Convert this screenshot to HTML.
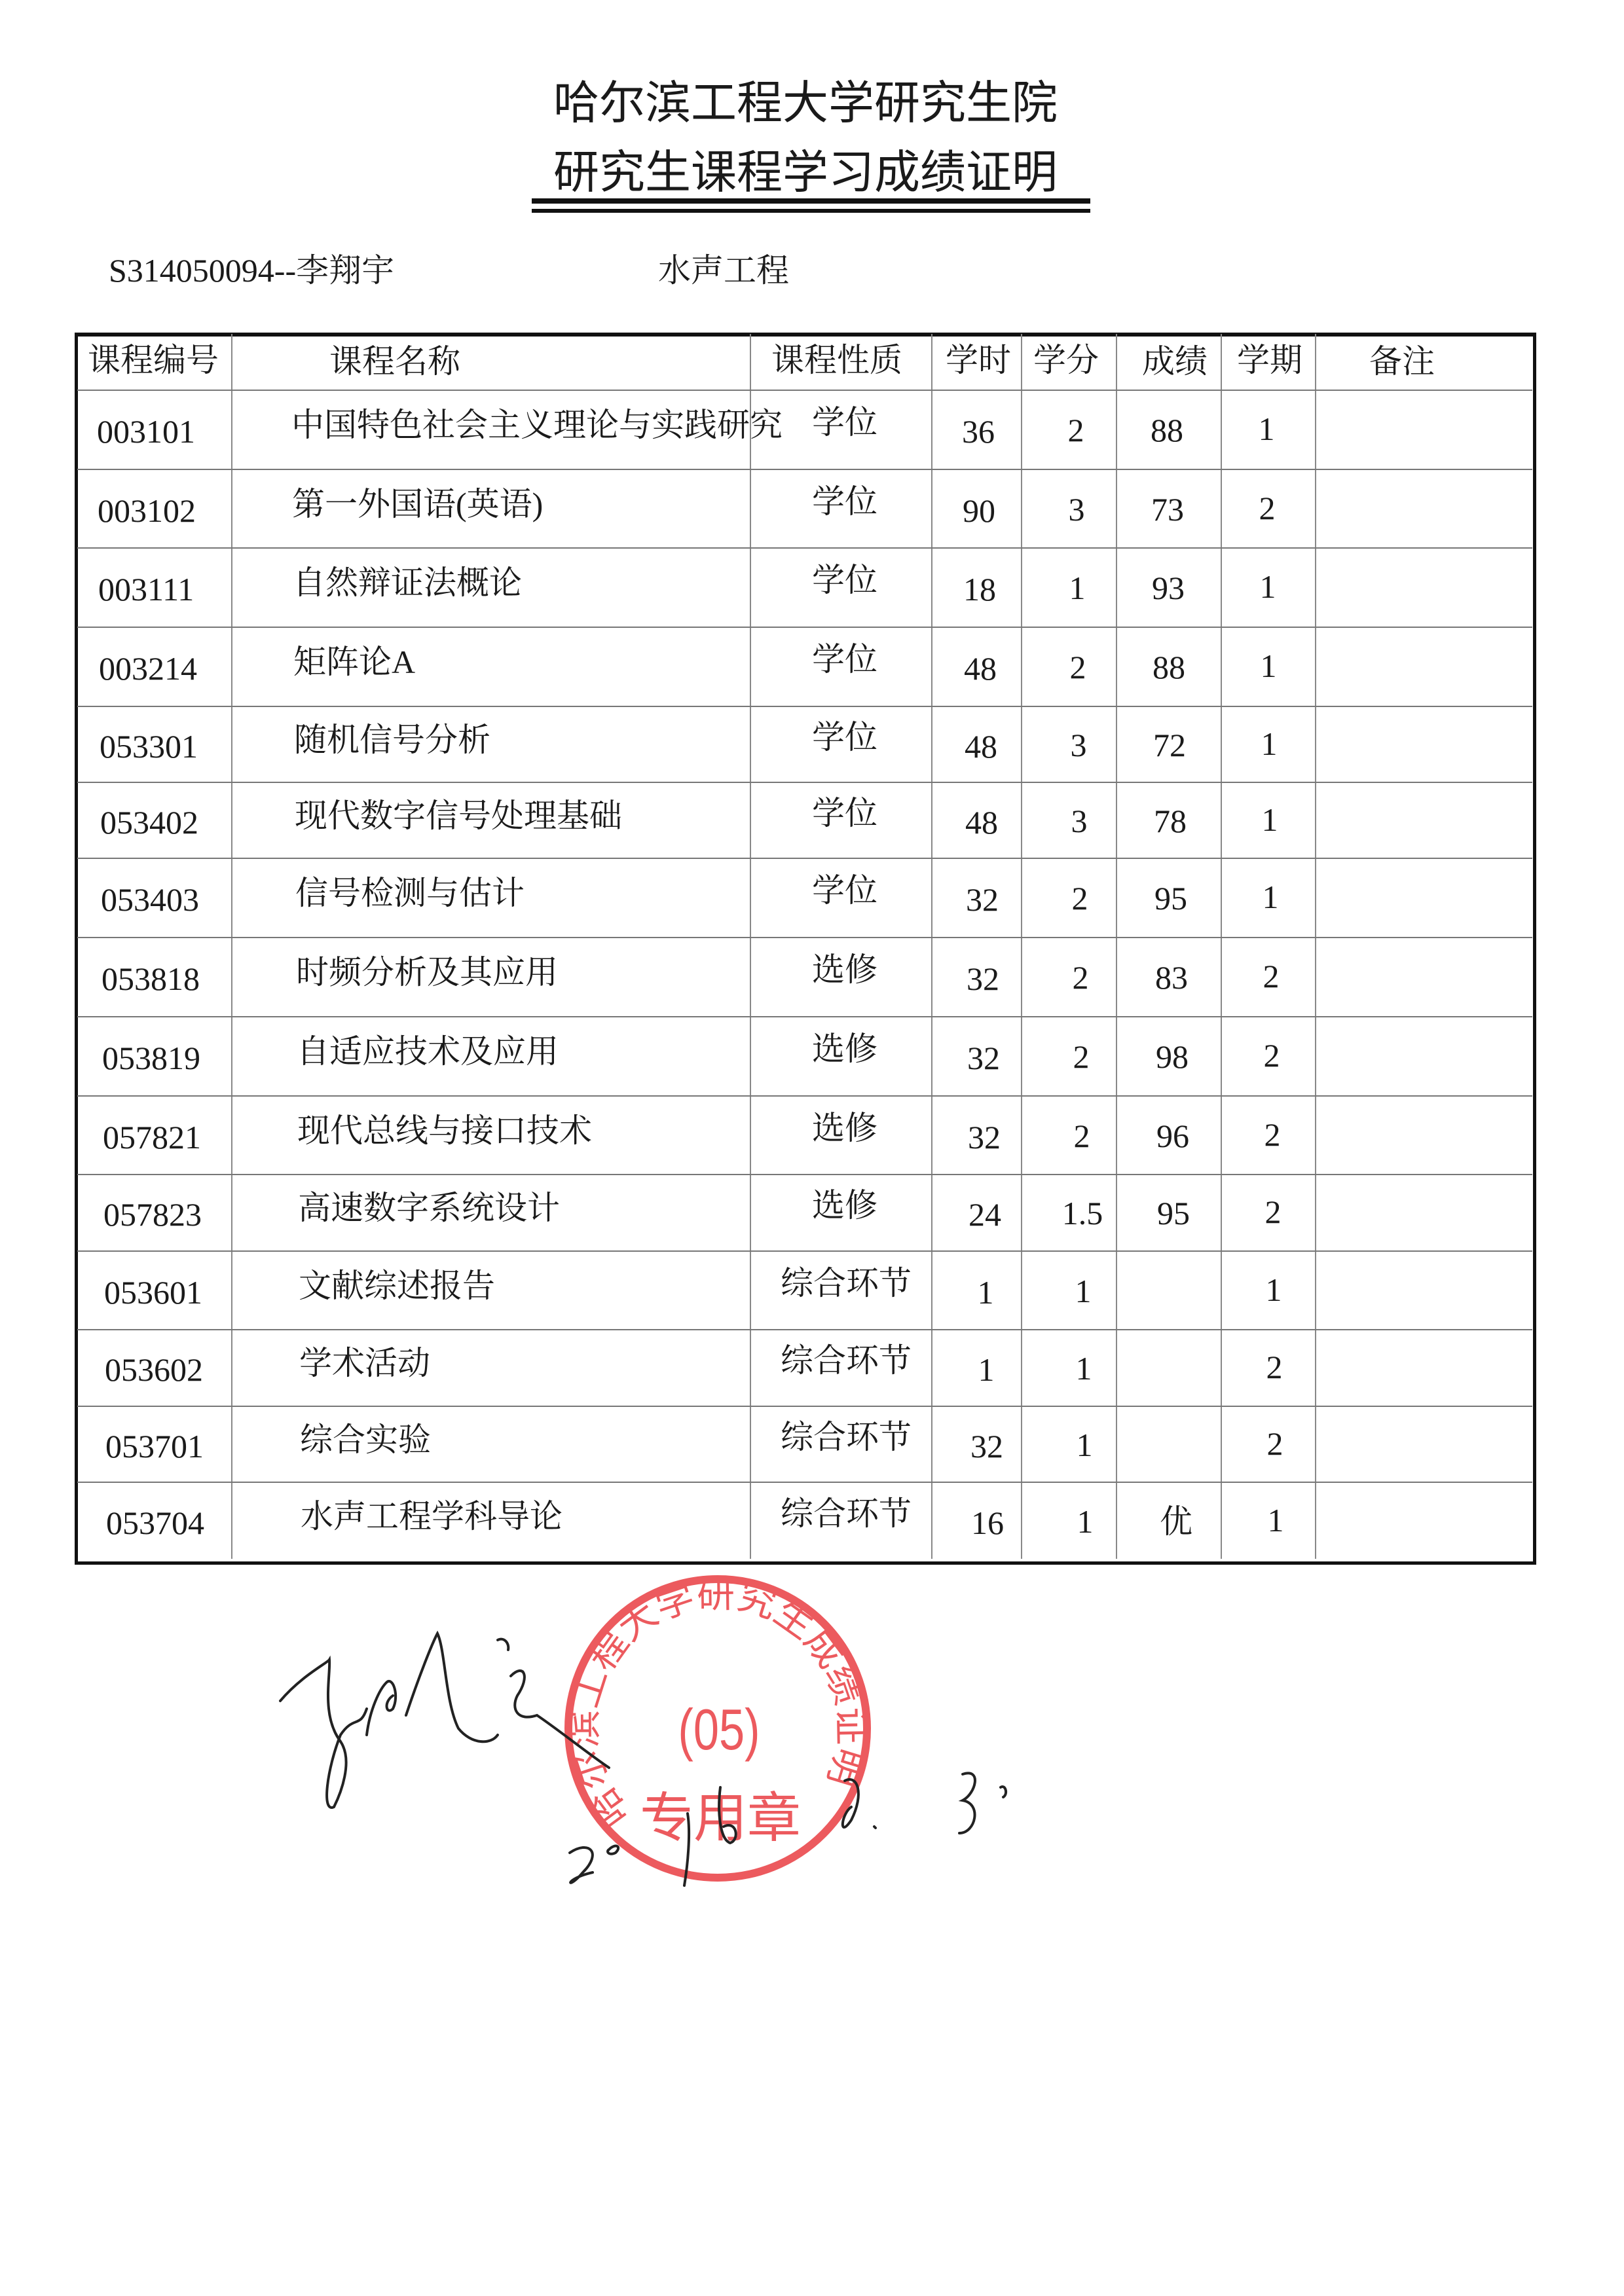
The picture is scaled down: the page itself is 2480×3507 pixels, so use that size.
<!DOCTYPE html>
<html><head><meta charset="utf-8"><style>
html,body{margin:0;padding:0;background:#fff}
body{width:2480px;height:3507px;position:relative;overflow:hidden;font-family:"Liberation Serif","Noto Serif CJK SC",serif;color:#1a1a1a}
.t{position:absolute;white-space:nowrap;line-height:1}
.h{font-size:70px;font-family:"Liberation Sans","Noto Sans CJK SC",sans-serif;left:0;width:2480px;text-align:center}
.c{font-size:50px;transform:translate(-50%,-50%)}
.l{font-size:50px;transform:translateY(-50%)}
.hl{position:absolute;left:118px;width:2222px;height:2px;background:#777}
.vl{position:absolute;top:510px;height:1871px;width:2px;background:#888}
</style></head><body>
<div class="t h" style="top:122px;left:-10px">哈尔滨工程大学研究生院</div>
<div class="t h" style="top:228px;left:-10px">研究生课程学习成绩证明</div>
<div style="position:absolute;left:812px;top:303px;width:853px;height:8px;background:#111"></div>
<div style="position:absolute;left:812px;top:319px;width:853px;height:6px;background:#111"></div>
<div class="t l" style="left:166px;top:413px;font-size:50px">S314050094--李翔宇</div>
<div class="t l" style="left:1005px;top:413px;font-size:50px">水声工程</div>

<div style="position:absolute;left:114px;top:508px;width:2222px;height:1871px;border:5px solid #111;border-top-width:6px"></div>
<div class="vl" style="left:353px"></div><div class="vl" style="left:1145px"></div><div class="vl" style="left:1422px"></div><div class="vl" style="left:1559px"></div><div class="vl" style="left:1704px"></div><div class="vl" style="left:1864px"></div><div class="vl" style="left:2008px"></div>
<div class="hl" style="top:595px"></div><div class="hl" style="top:716px"></div><div class="hl" style="top:836px"></div><div class="hl" style="top:957px"></div><div class="hl" style="top:1078px"></div><div class="hl" style="top:1194px"></div><div class="hl" style="top:1310px"></div><div class="hl" style="top:1431px"></div><div class="hl" style="top:1552px"></div><div class="hl" style="top:1673px"></div><div class="hl" style="top:1793px"></div><div class="hl" style="top:1910px"></div><div class="hl" style="top:2030px"></div><div class="hl" style="top:2147px"></div><div class="hl" style="top:2263px"></div>

<div class="t l" style="left:134px;top:550px">课程编号</div>
<div class="t l" style="left:503px;top:552px">课程名称</div>
<div class="t l" style="left:1178px;top:550px">课程性质</div>
<div class="t l" style="left:1444px;top:550px">学时</div>
<div class="t l" style="left:1578px;top:550px">学分</div>
<div class="t l" style="left:1744px;top:552px">成绩</div>
<div class="t l" style="left:1889px;top:550px">学期</div>
<div class="t l" style="left:2091px;top:552px">备注</div>

<div id="rows"></div>
<script>
var d=[
["003101","中国特色社会主义理论与实践研究","学位","36","2","88","1",655],
["003102","第一外国语(英语)","学位","90","3","73","2",776],
["003111","自然辩证法概论","学位","18","1","93","1",896],
["003214","矩阵论A","学位","48","2","88","1",1017],
["053301","随机信号分析","学位","48","3","72","1",1136],
["053402","现代数字信号处理基础","学位","48","3","78","1",1252],
["053403","信号检测与估计","学位","32","2","95","1",1370],
["053818","时频分析及其应用","选修","32","2","83","2",1491],
["053819","自适应技术及应用","选修","32","2","98","2",1612],
["057821","现代总线与接口技术","选修","32","2","96","2",1733],
["057823","高速数字系统设计","选修","24","1.5","95","2",1851],
["053601","文献综述报告","综合环节","1","1","","1",1970],
["053602","学术活动","综合环节","1","1","","2",2088],
["053701","综合实验","综合环节","32","1","","2",2205],
["053704","水声工程学科导论","综合环节","16","1","优","1",2322]];
var h="";
d.forEach(function(r,i){var y=r[7],dx=i*0.5;
h+='<div class="t l" style="left:'+(148+dx*2)+'px;top:'+(y+4)+'px">'+r[0]+'</div>';
h+='<div class="t l" style="left:'+(445+dx*2)+'px;top:'+(y-6)+'px">'+r[1]+'</div>';
h+='<div class="t l" style="left:'+(r[2].length>2?1192:1240)+'px;top:'+(y-10)+'px">'+r[2]+'</div>';
h+='<div class="t c" style="left:'+(1494+dx*2)+'px;top:'+(y+4)+'px">'+r[3]+'</div>';
h+='<div class="t c" style="left:'+(1643+dx*2)+'px;top:'+(y+2)+'px">'+r[4]+'</div>';
h+='<div class="t c" style="left:'+(1782+dx*2)+'px;top:'+(y+2)+'px">'+r[5]+'</div>';
h+='<div class="t c" style="left:'+(1934+dx*2)+'px;top:'+y+'px">'+r[6]+'</div>';});
document.getElementById("rows").innerHTML=h;
</script>

<svg style="position:absolute;left:0;top:0" width="2480" height="3507">
<defs><path id="arc" d="M965,2771 A185,185 0 1,1 1256,2732"/></defs>
<g fill="#ec5a5e" stroke="none">
<circle cx="1096" cy="2640" r="228" fill="none" stroke="#ec5a5e" stroke-width="12"/>
<text font-family="Liberation Sans,Noto Sans CJK SC,sans-serif" font-size="56"><textPath href="#arc" textLength="810" lengthAdjust="spacingAndGlyphs">哈尔滨工程大学研究生成绩证明</textPath></text>
<text x="1098" y="2672" text-anchor="middle" font-family="Liberation Sans,sans-serif" font-size="88" transform="translate(1098 0) scale(0.8 1) translate(-1098 0)">(05)</text>
<text x="1100" y="2805" text-anchor="middle" font-family="Liberation Sans,Noto Sans CJK SC,sans-serif" font-size="82">专用章</text>
</g>
<g fill="none" stroke="#222" stroke-width="4" stroke-linecap="round">
<path d="M428,2598 C460,2560 500,2540 503,2535 C505,2560 490,2620 520,2660 C540,2690 520,2740 510,2760 C490,2770 500,2700 520,2650 C540,2620 550,2640 560,2610"/>
<path d="M560,2650 C565,2610 580,2580 590,2570 C600,2560 610,2590 600,2610 C590,2620 585,2600 600,2590"/>
<path d="M620,2620 C640,2560 660,2510 668,2495 C680,2520 680,2600 700,2640 C720,2665 750,2665 760,2650"/>
<path d="M760,2505 C770,2500 778,2510 776,2520"/>
<path d="M780,2560 C800,2540 810,2560 790,2590 C780,2610 790,2630 820,2620 C850,2640 900,2680 930,2700"/>
<path d="M870,2830 C900,2810 920,2830 890,2860 C865,2890 860,2870 905,2860"/>
<path d="M930,2825 C940,2815 950,2820 940,2830 C930,2835 925,2828 930,2825"/>
<path d="M1050,2770 C1055,2800 1050,2850 1045,2880"/>
<path d="M1100,2730 C1095,2770 1100,2810 1115,2815 C1130,2810 1125,2780 1105,2790"/>
<path d="M1290,2720 C1310,2710 1320,2740 1300,2780 C1280,2810 1285,2770 1300,2760"/>
<path d="M1335,2790 l2,2"/>
<path d="M1470,2710 C1500,2700 1490,2740 1470,2750 C1500,2755 1490,2800 1465,2800"/>
<path d="M1528,2730 C1535,2725 1540,2740 1532,2745"/>
</g>
</svg>
</body></html>
